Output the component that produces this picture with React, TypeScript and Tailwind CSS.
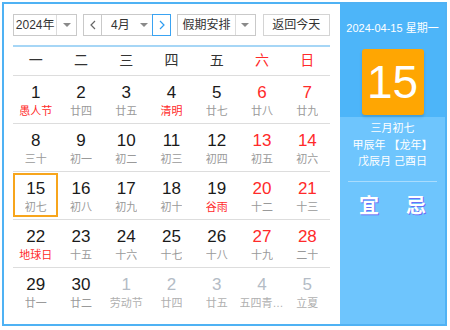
import React from 'react'

type Day = { n: number; l: string; red?: boolean; fest?: boolean; other?: boolean; sel?: boolean }

const weeks: Day[][] = [
  [
    { n: 1, l: '愚人节', fest: true },
    { n: 2, l: '廿四' },
    { n: 3, l: '廿五' },
    { n: 4, l: '清明', fest: true },
    { n: 5, l: '廿七' },
    { n: 6, l: '廿八', red: true },
    { n: 7, l: '廿九', red: true },
  ],
  [
    { n: 8, l: '三十' },
    { n: 9, l: '初一' },
    { n: 10, l: '初二' },
    { n: 11, l: '初三' },
    { n: 12, l: '初四' },
    { n: 13, l: '初五', red: true },
    { n: 14, l: '初六', red: true },
  ],
  [
    { n: 15, l: '初七', sel: true },
    { n: 16, l: '初八' },
    { n: 17, l: '初九' },
    { n: 18, l: '初十' },
    { n: 19, l: '谷雨', fest: true },
    { n: 20, l: '十二', red: true },
    { n: 21, l: '十三', red: true },
  ],
  [
    { n: 22, l: '地球日', fest: true },
    { n: 23, l: '十五' },
    { n: 24, l: '十六' },
    { n: 25, l: '十七' },
    { n: 26, l: '十八' },
    { n: 27, l: '十九', red: true },
    { n: 28, l: '二十', red: true },
  ],
  [
    { n: 29, l: '廿一' },
    { n: 30, l: '廿二' },
    { n: 1, l: '劳动节', other: true },
    { n: 2, l: '廿四', other: true },
    { n: 3, l: '廿五', other: true },
    { n: 4, l: '五四青年节', other: true },
    { n: 5, l: '立夏', other: true },
  ],
]

const font = { fontFamily: '"Liberation Sans", "Noto Sans CJK SC", sans-serif' }

function Caret() {
  return <span className="block w-0 h-0 border-l-[4px] border-r-[4px] border-t-[4px] border-l-transparent border-r-transparent border-t-[#8a8a8a]" />
}

function Chevron({ dir, color }: { dir: 'l' | 'r'; color: string }) {
  return (
    <svg width="6" height="10" viewBox="0 0 6 10">
      <path d={dir === 'l' ? 'M5 1 L1 5 L5 9' : 'M1 1 L5 5 L1 9'} fill="none" stroke={color} strokeWidth="1.2" />
    </svg>
  )
}

function Cell({ d }: { d: Day }) {
  const numColor = d.other ? 'text-[#b4bcc6]' : d.red ? 'text-[#ff2a2a]' : 'text-[#1a1a1a]'
  const lunColor = d.other ? 'text-[#b0b0b0]' : d.fest ? 'text-[#ff2a2a]' : 'text-[#9a9a9a]'
  return (
    <div className="flex justify-center min-w-0">
      <div
        className={
          'w-full h-[44px] mt-px flex flex-col items-center ' +
          (d.sel ? 'border-2 border-[#f7a51c] pt-[5px]' : 'pt-[7px]')
        }
      >
        <span className={'text-[17px] leading-[18px] ' + numColor}>{d.n}</span>
        <span className={'text-[11px] leading-[16px] mt-px max-w-[45px] whitespace-nowrap overflow-hidden text-ellipsis ' + lunColor}>
          {d.l}
        </span>
      </div>
    </div>
  )
}

export default function App() {
  return (
    <div className="w-[450px] h-[330px] bg-white p-[2px]" style={font}>
      <div className="flex w-[445px] h-[324px] border-2 border-[#4fb2f4]">
        <div className="w-[336px] pl-[9px] pr-[10px] pt-[10px] bg-white">
          <div className="flex items-center h-[22px] text-[12px] text-[#333]">
            <div className="flex h-full w-[65px] border border-[#c9c9c9] bg-white">
              <span className="flex-1 flex items-center justify-center">2024年</span>
              <span className="w-[20px] border-l border-[#dcdcdc] flex items-center justify-center">
                <Caret />
              </span>
            </div>
            <div className="flex h-full ml-[6px]">
              <span className="w-[19px] border border-[#c9c9c9] flex items-center justify-center">
                <Chevron dir="l" color="#666" />
              </span>
              <span className="w-[50px] border-y border-[#c9c9c9] flex items-center">
                <span className="flex-1 text-center pl-[2px]">4月</span>
                <span className="w-[16px] flex items-center justify-center">
                  <Caret />
                </span>
              </span>
              <span className="w-[19px] border border-[#3aa3f2] flex items-center justify-center">
                <Chevron dir="r" color="#2f9cf0" />
              </span>
            </div>
            <div className="flex h-full w-[79px] ml-[6px] border border-[#c9c9c9] bg-white">
              <span className="flex-1 flex items-center justify-center text-[12px]">假期安排</span>
              <span className="w-[20px] border-l border-[#dcdcdc] flex items-center justify-center">
                <Caret />
              </span>
            </div>
            <div className="h-full w-[68px] ml-[7px] border border-[#d4d4d4] bg-white flex items-center justify-center text-[12px]">
              返回今天
            </div>
          </div>
          <div className="h-[2px] bg-[#a6d6f6] mt-[9px]" />
          <div className="grid grid-cols-7 h-[29px] border-b border-[#dddddd] text-[14px] items-center text-center text-[#333] pb-px">
            {['一', '二', '三', '四', '五'].map((w) => (
              <span key={w}>{w}</span>
            ))}
            <span className="text-[#ff2a2a]">六</span>
            <span className="text-[#ff2a2a]">日</span>
          </div>
          {weeks.map((w, i) => (
            <div
              key={i}
              className={'grid grid-cols-7 h-[48px] ' + (i < weeks.length - 1 ? 'border-b border-[#dddddd]' : '')}
            >
              {w.map((d, j) => (
                <Cell key={j} d={d} />
              ))}
            </div>
          ))}
        </div>
        <div className="flex-1 flex flex-col bg-[#6ec5fd] text-white">
          <div className="h-[113px] bg-[#4db5f9] flex flex-col items-center">
            <span className="text-[11px] leading-[16px] mt-[16px] whitespace-nowrap">2024-04-15 星期一</span>
            <div className="mt-[13px] w-[62px] h-[66px] bg-[#ffa602] rounded-[3px] shadow-[0_2px_3px_rgba(0,0,0,0.15)] flex items-center justify-center text-[46px] leading-none">
              15
            </div>
          </div>
          <div className="flex flex-col items-center text-[11px] leading-[16.5px] mt-[3px] whitespace-nowrap">
            <span>三月初七</span>
            <span>甲辰年 【龙年】</span>
            <span>戊辰月 己酉日</span>
          </div>
          <div className="h-px bg-[#a9dcfd] mx-[8px] mt-[11px]" />
          <div className="flex justify-center gap-[27px] mt-[14px] text-[20px] font-semibold leading-none [text-shadow:1px_1px_0_#6a6ef5]">
            <span>宜</span>
            <span>忌</span>
          </div>
        </div>
      </div>
    </div>
  )
}
